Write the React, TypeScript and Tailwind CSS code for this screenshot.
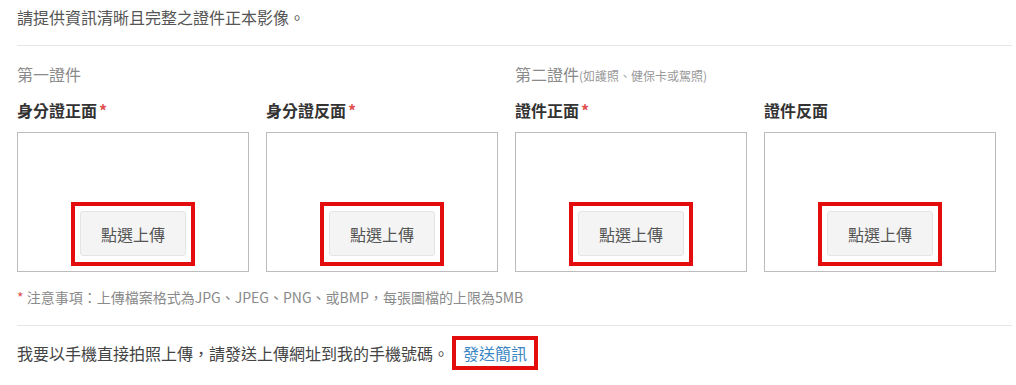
const FONT = "font-['Noto_Sans_CJK_TC',sans-serif]"

interface Slot {
  label: string
  required: boolean
}

const SLOTS: Slot[] = [
  { label: '身分證正面', required: true },
  { label: '身分證反面', required: true },
  { label: '證件正面', required: true },
  { label: '證件反面', required: false },
]

function UploadBox({ slot }: { slot: Slot }) {
  return (
    <div>
      <div className="text-[16px] leading-[24px] font-bold text-[#333]">
        {slot.label}
        {slot.required && <span className="ml-[2px] text-[#e0504f]">*</span>}
      </div>
      <div className="mt-[10px] w-[232px] h-[140px] border border-[#bcbcbc] flex flex-col items-center justify-end pb-[5px]">
        <div className="border-4 border-[#e30d0d] p-[5px] pb-[6px]">
          <button className="w-[106px] h-[45px] bg-[#f4f4f4] border border-[#e4e4e4] rounded-[3px] text-[16px] text-[#555]">
            點選上傳
          </button>
        </div>
      </div>
    </div>
  )
}

export default function App() {
  return (
    <div className={`${FONT} bg-white w-[1016px] h-[385px] pl-[17px] pr-[4px] pt-[5px] text-[#555]`}>
      <p className="text-[16px] leading-[24px]">請提供資訊清晰且完整之證件正本影像。</p>

      <div className="mt-[16px] h-px bg-[#e6e6e6]" />

      <div className="grid grid-cols-2 mt-[16px] w-[996px]">
        <div className="text-[16px] leading-[24px] text-[#8a8a8a]">第一證件</div>
        <div className="text-[16px] leading-[24px] text-[#8a8a8a]">
          第二證件<span className="text-[12px] text-[#999]">(如護照、健保卡或駕照)</span>
        </div>
      </div>

      <div className="grid grid-cols-4 mt-[10px] w-[996px]">
        {SLOTS.map(s => (
          <UploadBox key={s.label} slot={s} />
        ))}
      </div>

      <p className="mt-[15px] text-[14px] leading-[20px] text-[#8a8a8a]">
        <span className="text-[#e0504f]">*</span> 注意事項：上傳檔案格式為JPG、JPEG、PNG、或BMP，每張圖檔的上限為5MB
      </p>

      <div className="mt-[18px] h-px bg-[#e6e6e6]" />

      <p className="mt-[10px] text-[16px] leading-[24px] text-[#444] flex items-center">
        我要以手機直接拍照上傳，請發送上傳網址到我的手機號碼。
        <span className="ml-[3px] border-4 border-[#e30d0d] px-[7px] py-[1px]">
          <a className="text-[#3a86c4]">發送簡訊</a>
        </span>
      </p>
    </div>
  )
}
